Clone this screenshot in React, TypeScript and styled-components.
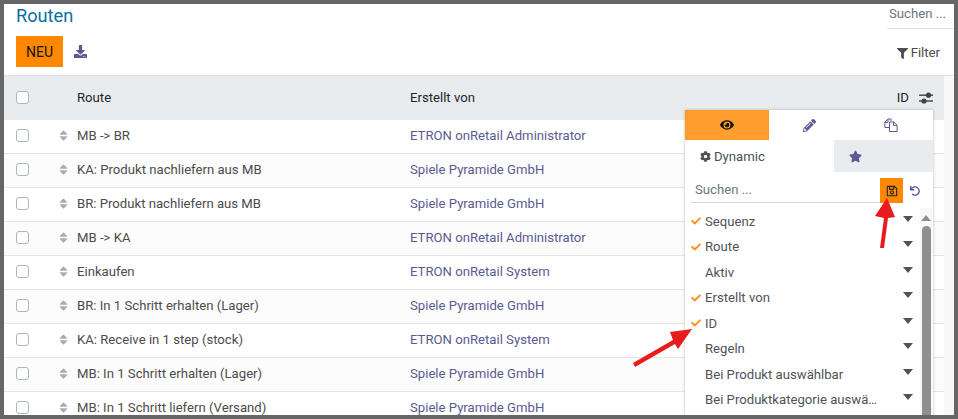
import React from "react";
import styled, { createGlobalStyle } from "styled-components";
import {
  FaCheck,
  FaCog,
  FaDownload,
  FaEye,
  FaFilter,
  FaPencilAlt,
  FaRegSave,
  FaSort,
  FaStar,
  FaUndo,
} from "react-icons/fa";

const rows = [
  { route: "MB -> BR", user: "ETRON onRetail Administrator" },
  { route: "KA: Produkt nachliefern aus MB", user: "Spiele Pyramide GmbH" },
  { route: "BR: Produkt nachliefern aus MB", user: "Spiele Pyramide GmbH" },
  { route: "MB -> KA", user: "ETRON onRetail Administrator" },
  { route: "Einkaufen", user: "ETRON onRetail System" },
  { route: "BR: In 1 Schritt erhalten (Lager)", user: "Spiele Pyramide GmbH" },
  { route: "KA: Receive in 1 step (stock)", user: "ETRON onRetail System" },
  { route: "MB: In 1 Schritt erhalten (Lager)", user: "Spiele Pyramide GmbH" },
  { route: "MB: In 1 Schritt liefern (Versand)", user: "Spiele Pyramide GmbH" },
];

const fields = [
  { label: "Sequenz", checked: true },
  { label: "Route", checked: true },
  { label: "Aktiv", checked: false },
  { label: "Erstellt von", checked: true },
  { label: "ID", checked: true },
  { label: "Regeln", checked: false },
  { label: "Bei Produkt auswählbar", checked: false },
  { label: "Bei Produktkategorie auswählbar", checked: false },
];

const GlobalStyle = createGlobalStyle`
  html, body {
    margin: 0;
    padding: 0;
    background: #666666;
  }
  body {
    font-family: Roboto, "Liberation Sans", sans-serif;
    font-size: 13.15px;
    color: #4c4c4c;
  }
`;

const Frame = styled.div`
  position: relative;
  box-sizing: border-box;
  width: 958px;
  height: 419px;
  border: 4px solid #666666;
  background: #ffffff;
  overflow: hidden;
`;

const ControlPanel = styled.header`
  display: flex;
  justify-content: space-between;
  box-sizing: border-box;
  height: 72px;
  border-bottom: 1px solid #dee2e6;
`;

const ControlLeft = styled.div`
  display: flex;
  flex-direction: column;
  padding-left: 12px;
`;

const Title = styled.h1`
  margin: 0;
  height: 32px;
  font-size: 18.2px;
  font-weight: 400;
  line-height: 24px;
  color: #0b6fa4;
`;

const Buttons = styled.div`
  display: flex;
  align-items: center;
  gap: 11px;
`;

const NewButton = styled.button`
  width: 47px;
  height: 31px;
  padding: 0;
  border: 0;
  background: #ff8800;
  color: #111111;
  font: inherit;
  font-size: 14px;
`;

const DownloadButton = styled.span`
  display: flex;
  color: #5c5a92;
  font-size: 13px;
`;

const ControlRight = styled.div`
  display: flex;
  flex-direction: column;
  align-items: flex-end;
  width: 67px;
`;

const TopSearch = styled.div`
  box-sizing: border-box;
  width: 100%;
  height: 25px;
  padding: 2px 0 0 2px;
  border-bottom: 1px solid #dee2e6;
  color: #6c757d;
  line-height: 16px;
  white-space: nowrap;
`;

const FilterButton = styled.div`
  display: flex;
  align-items: center;
  gap: 3px;
  padding: 16px 14px 0 0;
  color: #4c4c4c;
  line-height: 16px;
  svg {
    font-size: 11px;
  }
`;

const TableArea = styled.div`
  background: #f8f9fa;
  padding-right: 10px;
  height: 339px;
  overflow: hidden;
`;

const Row = styled.div<{ $head?: boolean; $odd?: boolean }>`
  display: grid;
  grid-template-columns: 73px 333px 1fr;
  align-items: center;
  height: ${(p) => (p.$head ? "44px" : "34px")};
  box-sizing: border-box;
  padding-bottom: ${(p) => (p.$head ? "1px" : "2px")};
  background: ${(p) => (p.$head ? "#e9ecef" : p.$odd ? "#fcfcfc" : "#ffffff")};
  border-bottom: ${(p) => (p.$head ? "0" : "1px solid #e5e5e5")};
  color: ${(p) => (p.$head ? "#212529" : "#4c4c4c")};
`;

const SelectCell = styled.div`
  display: flex;
  align-items: center;
  justify-content: space-between;
  padding: 0 7px 0 12px;
`;

const Checkbox = styled.span`
  display: block;
  box-sizing: border-box;
  width: 13px;
  height: 13px;
  border: 1px solid #adb5bd;
  border-radius: 3px;
  background: #ffffff;
`;

const Handle = styled.span`
  display: flex;
  color: #a8adb7;
  font-size: 13px;
`;

const UserCell = styled.span`
  color: #5c5a92;
`;

const HeadEnd = styled.div`
  display: flex;
  justify-content: space-between;
  align-items: center;
  padding-right: 11px;
`;

const HeadOptions = styled.span`
  display: flex;
  align-items: center;
  gap: 10px;
  color: #212529;
`;

const Panel = styled.aside`
  position: absolute;
  top: 106px;
  left: 681px;
  width: 248px;
  height: 320px;
  background: #ffffff;
  box-shadow: 0 0 3px rgba(0, 0, 0, 0.25);
`;

const ModeTabs = styled.div`
  display: grid;
  grid-template-columns: 84px 80px 84px;
  height: 30px;
`;

const ModeTab = styled.div<{ $active?: boolean }>`
  display: flex;
  align-items: center;
  justify-content: center;
  box-sizing: border-box;
  font-size: ${(p) => (p.$active ? "14px" : "13px")};
  background: ${(p) => (p.$active ? "#ff9d2e" : "transparent")};
  border: ${(p) => (p.$active ? "1px solid #ff9a20" : "0")};
  color: ${(p) => (p.$active ? "#111111" : "#5c5a92")};
`;

const ViewTabs = styled.div`
  display: grid;
  grid-template-columns: 149px 99px;
  height: 32px;
`;

const DynamicTab = styled.div`
  display: flex;
  align-items: center;
  gap: 3px;
  padding-left: 15px;
  color: #495057;
  svg {
    font-size: 11px;
  }
`;

const StarTab = styled.div`
  display: flex;
  align-items: center;
  padding-left: 15px;
  background: #e9ecef;
  color: #5c5a92;
  font-size: 13px;
`;

const SearchRow = styled.div`
  display: flex;
  align-items: flex-start;
  padding: 6px 0 0 6px;
  height: 30.4px;
`;

const SearchInput = styled.div`
  box-sizing: border-box;
  width: 189px;
  height: 25px;
  padding: 4px 0 0 4px;
  border-bottom: 1px solid #ced4da;
  color: #6c757d;
  line-height: 16px;
`;

const SaveButton = styled.span`
  display: flex;
  align-items: center;
  justify-content: center;
  width: 23px;
  height: 25px;
  background: #ff8800;
  color: #212529;
  font-size: 12px;
`;

const ResetButton = styled.span`
  display: flex;
  align-items: center;
  justify-content: center;
  width: 24px;
  height: 25px;
  color: #5c5a92;
  font-size: 10px;
`;

const ListArea = styled.div`
  display: grid;
  grid-template-columns: 1fr 12px;
  height: 213px;
  margin-right: 1px;
`;

const FieldList = styled.ul`
  margin: 0;
  padding: 0;
  list-style: none;
`;

const FieldItem = styled.li`
  display: grid;
  grid-template-columns: 14px 174px 1fr;
  align-items: center;
  height: 25.5px;
  padding-left: 6px;
  color: #4f5359;
`;

const CheckSlot = styled.span`
  display: flex;
  color: #ff9322;
  font-size: 10px;
`;

const FieldLabel = styled.span`
  overflow: hidden;
  white-space: nowrap;
  text-overflow: ellipsis;
`;

const FieldCaret = styled.span`
  justify-self: end;
  width: 0;
  height: 0;
  margin: -5px 7px 0 0;
  border-left: 5.5px solid transparent;
  border-right: 5.5px solid transparent;
  border-top: 6px solid #4f5359;
`;

const ScrollTrack = styled.div`
  display: flex;
  flex-direction: column;
  align-items: center;
  background: #f8f8f8;
`;

const ScrollUp = styled.span`
  width: 0;
  height: 0;
  margin: 7px 0 5px;
  border-left: 5px solid transparent;
  border-right: 5px solid transparent;
  border-bottom: 6px solid #8f8f8f;
`;

const ScrollThumb = styled.span`
  display: block;
  width: 9px;
  flex: 1;
  border-radius: 5px 5px 0 0;
  background: #8f8f8f;
`;

const ArrowLayer = styled.svg`
  position: absolute;
  top: -4px;
  left: -4px;
  pointer-events: none;
`;

// fa-files-o
const FilesIcon = () => (
  <svg width="14" height="14" viewBox="0 0 14 14" fill="none" stroke="currentColor" strokeWidth="1">
    <path d="M5 9.5H.9V4.2L4 1h3v2.2" />
    <path d="M.9 4.4H4V1.2" />
    <path d="M5.5 4h4.2l3.4 3.2v6.3H5.5z" />
    <path d="M9.5 4v3.4h3.4" />
  </svg>
);

// zwei Regler wie in der Spaltenauswahl
const SlidersIcon = () => (
  <svg width="14" height="12" viewBox="0 0 14 12" fill="#3f4349">
    <rect x="0" y="2.5" width="14" height="1.4" />
    <rect x="0" y="8.3" width="14" height="1.4" />
    <circle cx="9.5" cy="3.2" r="2.6" />
    <circle cx="5" cy="9" r="2.6" />
  </svg>
);

const App = () => (
  <Frame>
    <GlobalStyle />
    <ControlPanel>
      <ControlLeft>
        <Title>Routen</Title>
        <Buttons>
          <NewButton>NEU</NewButton>
          <DownloadButton>
            <FaDownload />
          </DownloadButton>
        </Buttons>
      </ControlLeft>
      <ControlRight>
        <TopSearch>Suchen ...</TopSearch>
        <FilterButton>
          <FaFilter />
          Filter
        </FilterButton>
      </ControlRight>
    </ControlPanel>

    <TableArea>
      <Row $head>
        <SelectCell>
          <Checkbox />
        </SelectCell>
        <span>Route</span>
        <HeadEnd>
          Erstellt von
          <HeadOptions>
            ID
            <SlidersIcon />
          </HeadOptions>
        </HeadEnd>
      </Row>
      {rows.map((row, index) => (
        <Row key={index} $odd={index % 2 === 1}>
          <SelectCell>
            <Checkbox />
            <Handle>
              <FaSort />
            </Handle>
          </SelectCell>
          <span>{row.route}</span>
          <UserCell>{row.user}</UserCell>
        </Row>
      ))}
    </TableArea>

    <Panel>
      <ModeTabs>
        <ModeTab $active>
          <FaEye />
        </ModeTab>
        <ModeTab>
          <FaPencilAlt />
        </ModeTab>
        <ModeTab>
          <FilesIcon />
        </ModeTab>
      </ModeTabs>
      <ViewTabs>
        <DynamicTab>
          <FaCog />
          Dynamic
        </DynamicTab>
        <StarTab>
          <FaStar />
        </StarTab>
      </ViewTabs>
      <SearchRow>
        <SearchInput>Suchen ...</SearchInput>
        <SaveButton>
          <FaRegSave />
        </SaveButton>
        <ResetButton>
          <FaUndo />
        </ResetButton>
      </SearchRow>
      <ListArea>
        <FieldList>
          {fields.map((field) => (
            <FieldItem key={field.label}>
              <CheckSlot>{field.checked && <FaCheck />}</CheckSlot>
              <FieldLabel>{field.label}</FieldLabel>
              <FieldCaret />
            </FieldItem>
          ))}
        </FieldList>
        <ScrollTrack>
          <ScrollUp />
          <ScrollThumb />
        </ScrollTrack>
      </ListArea>
    </Panel>

    <ArrowLayer width="958" height="419" viewBox="0 0 958 419">
      <polygon points="887,198 875,216 884,218 880,248 884,248 888,218 895,217" fill="#e81c1c" />
      <polygon points="692,329 670,332 673,340 633,363 635,367 675,344 678,349" fill="#e81c1c" />
    </ArrowLayer>
  </Frame>
);

export default App;
